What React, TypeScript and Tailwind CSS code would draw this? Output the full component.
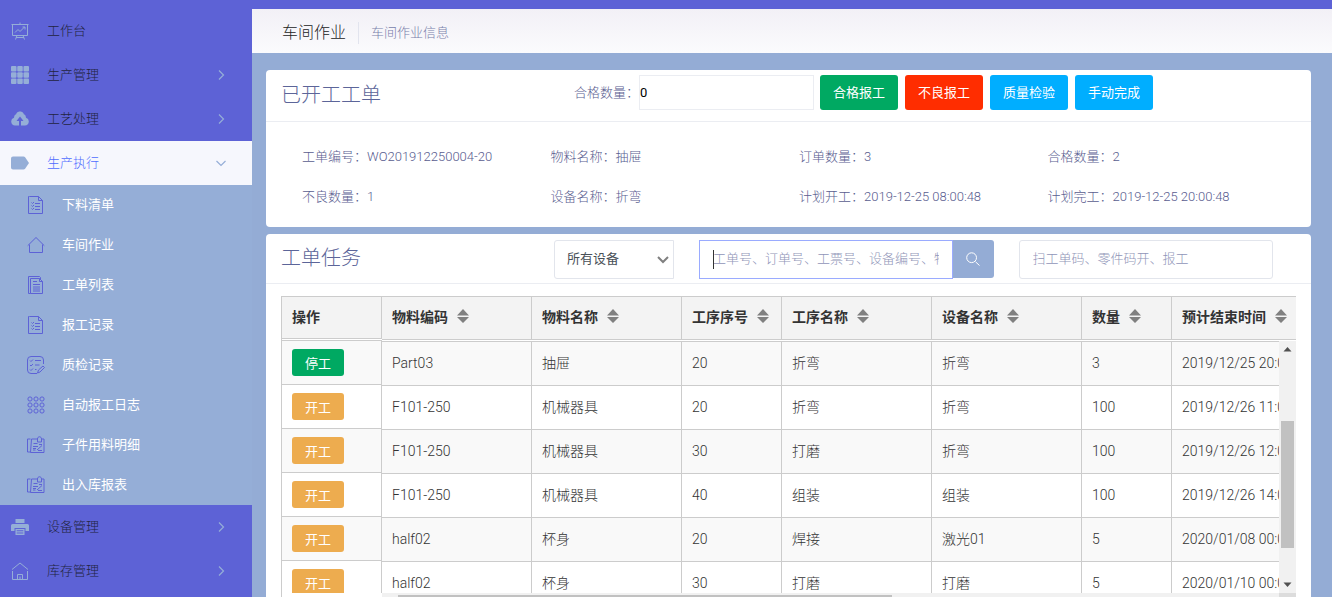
import { useState } from "react"
import type { ReactNode } from "react"
import { clsx } from "clsx"

const line = { fill: "none", stroke: "currentColor", strokeWidth: 1 }

const icons: Record<string, ReactNode> = {
  board: (
    <g {...line}>
      <path d="M.5 2.5h17M1.5 2.5v11h15v-11M9 .5v2M6 13.5l-1.5 4M12 13.5l1.5 4M5 15.5h8" />
      <path d="M4 10.5l3-3 2 2 4.500-4.500M11.500 5h2.500v2.500" />
    </g>
  ),
  grid: (
    <g fill="currentColor">
      {[0, 6.25, 12.5].map((y) =>
        [0, 6.25, 12.5].map((x) => <rect key={`${x}-${y}`} x={x} y={y} width="5.5" height="5.500" rx="1" />)
      )}
    </g>
  ),
  cloud: (
    <path
      fill="currentColor"
      fillRule="evenodd"
      d="M4 15.500a4 4 0 0 1-1-7.800C3.200 5 4.500 4.500 5 4.500 6 1.500 8 1.500 9 1.500s3 0 4 3c.5 0 1.800.5 2 3.200a4 4 0 0 1-1 7.800h-4V11h2.500L9 6.500 5.500 11H8v4.500z"
    />
  ),
  tag: <path fill="currentColor" d="M2 2.500h10.500a2 2 0 0 1 1.600.8L18 9l-3.900 5.700a2 2 0 0 1-1.600.8H2a2 2 0 0 1-2-2v-9a2 2 0 0 1 2-2z" />,
  printer: (
    <g fill="currentColor">
      <path d="M4.500 1h9v4h-9z" />
      <path d="M1.500 6h15A1.500 1.500 0 0 1 18 7.500V13h-3.500v-3h-11v3H0V7.500A1.500 1.500 0 0 1 1.500 6z" />
      <path d="M4.500 11h9v6h-9zm1.200 1.200v1h6.600v-1zm0 2.200v1h6.600v-1z" fillRule="evenodd" />
    </g>
  ),
  house: (
    <g {...line}>
      <path d="M1 7.500L9 1l8 6.500M1.500 9v8.500h15V9M6.500 17.500v-5h5v5M9 14.500v3" />
    </g>
  ),
  doc: (
    <g {...line}>
      <path d="M2.500.5h9l4 4v13h-14V.5zM11.500.5v4h4" />
      <path d="M4.500 6.500l1 1 1.500-1.500M8 7.500h5M4.500 9.500l1 1 1.500-1.500M8 10.500h5M4.500 12.500l1 1 1.500-1.500M8 13.500h5" />
    </g>
  ),
  home: (
    <g {...line}>
      <path d="M.7 9.700L9 1.500l8.300 8.200M2.500 8.500v8h13v-8" />
    </g>
  ),
  docs: (
    <g {...line}>
      <path d="M3.500 17.500h12v-12l-3-3h-9zM3.500 17.500h-2V.5h11l1 1v2M12.500 2.500v3h3" />
      <path d="M6 5.500h4M6 8.500h7M6 11h7M6 13h7M6 15h7" />
    </g>
  ),
  check: (
    <g {...line}>
      <path d="M10 17.500H4a3.500 3.500 0 0 1-3.500-3.500V4A3.500 3.500 0 0 1 4 .5h9A3.500 3.500 0 0 1 16.500 4v4" />
      <path d="M3 4.500l1 1 2-2M8 4.500h6M3 9l1 1 2-2M8 9h4.500M3 13.500l1 1 2-2M8 13.500h1.500" />
      <path d="M10.500 17l1-3 4.500-4 1.500 1.500-4.500 4.500z" />
    </g>
  ),
  dots: (
    <g {...line}>
      {[3, 9, 15].map((y) => [3, 9, 15].map((x) => <circle key={`${x}-${y}`} cx={x} cy={y} r="2.100" />))}
    </g>
  ),
  report: (
    <g {...line}>
      <path d="M3.500 3H.5v13h3M4.500 3l-1 13.500h13.500V3h-2M4.500 3h6.500M10.500 3c0-3 4-3 4 0v3h-4z" />
      <path d="M6.500 7.500h4M12 8.500h3M6 10.500h5M6 12.500h3M6 14h2.500M10 14l5-4.500M11 14.500h4" />
    </g>
  ),
}

function Icon({ name, className }: { name: string; className?: string }) {
  return (
    <svg viewBox="0 0 18 18" className={clsx("size-[18px] shrink-0", className)} aria-hidden="true">
      {icons[name]}
    </svg>
  )
}

function Chevron({ down }: { down?: boolean }) {
  return (
    <svg viewBox="0 0 10 10" className="size-[10px] text-[#95aed7]" aria-hidden="true">
      <path d={down ? "M.5 3l4.500 4.500L9.500 3" : "M3 .5L7.500 5 3 9.500"} fill="none" stroke="currentColor" strokeWidth="1.200" />
    </svg>
  )
}

const menuTop = [
  { icon: "board", label: "工作台", arrow: false },
  { icon: "grid", label: "生产管理", arrow: true },
  { icon: "cloud", label: "工艺处理", arrow: true },
]

const submenu = [
  { icon: "doc", label: "下料清单" },
  { icon: "home", label: "车间作业" },
  { icon: "docs", label: "工单列表" },
  { icon: "doc", label: "报工记录" },
  { icon: "check", label: "质检记录" },
  { icon: "dots", label: "自动报工日志" },
  { icon: "report", label: "子件用料明细" },
  { icon: "report", label: "出入库报表" },
]

const menuBottom = [
  { icon: "printer", label: "设备管理", arrow: true },
  { icon: "house", label: "库存管理", arrow: true },
]

const info = [
  ["工单编号", "WO201912250004-20"],
  ["物料名称", "抽屉"],
  ["订单数量", "3"],
  ["合格数量", "2"],
  ["不良数量", "1"],
  ["设备名称", "折弯"],
  ["计划开工", "2019-12-25 08:00:48"],
  ["计划完工", "2019-12-25 20:00:48"],
]

const columns = ["物料编码", "物料名称", "工序序号", "工序名称", "设备名称", "数量", "预计结束时间"]

const rows = [
  { running: true, cells: ["Part03", "抽屉", "20", "折弯", "折弯", "3", "2019/12/25 20:00"] },
  { running: false, cells: ["F101-250", "机械器具", "20", "折弯", "折弯", "100", "2019/12/26 11:00"] },
  { running: false, cells: ["F101-250", "机械器具", "30", "打磨", "折弯", "100", "2019/12/26 12:00"] },
  { running: false, cells: ["F101-250", "机械器具", "40", "组装", "组装", "100", "2019/12/26 14:00"] },
  { running: false, cells: ["half02", "杯身", "20", "焊接", "激光01", "5", "2020/01/08 00:00"] },
  { running: false, cells: ["half02", "杯身", "30", "打磨", "打磨", "5", "2020/01/10 00:00"] },
]

type MenuEntry = { icon: string; label: string; arrow: boolean }

function MenuItem({ item, active }: { item: MenuEntry; active?: boolean }) {
  return (
    <a
      href="#"
      className={clsx(
        "flex h-11 shrink-0 items-center pl-[11px] pr-[26px]",
        active ? "bg-[#f6f7fd] text-[#4f6cff]" : "text-[#22243f]"
      )}
    >
      <Icon name={item.icon} className="text-[#95aed7]" />
      <span className="ml-[18px] flex-1">{item.label}</span>
      {item.arrow && <Chevron down={active} />}
    </a>
  )
}

function Sidebar() {
  return (
    <nav className="flex w-[252px] shrink-0 flex-col overflow-hidden bg-[#5d62d6] pt-[9px]">
      {menuTop.map((item) => (
        <MenuItem key={item.label} item={item} />
      ))}
      <MenuItem item={{ icon: "tag", label: "生产执行", arrow: true }} active />
      <div className="shrink-0 bg-[#95aed7]">
        {submenu.map((item) => (
          <a key={item.label} href="#" className="flex h-10 items-center pl-[27px] font-normal text-white">
            <Icon name={item.icon} className="text-[#5d62d6]" />
            <span className="ml-[17px]">{item.label}</span>
          </a>
        ))}
      </div>
      {menuBottom.map((item) => (
        <MenuItem key={item.label} item={item} />
      ))}
    </nav>
  )
}

function OrderCard() {
  const [qty, setQty] = useState("0")
  const btn = "h-[35px] w-[78px] rounded-[3px] font-normal text-white"

  return (
    <section className="shrink-0 rounded bg-white">
      <div className="flex h-[52px] items-center border-b border-[#ebedf2] px-[15px] pb-[6px]">
        <h2 className="w-[293px] pt-1 text-[20px] text-[#5c6599]">已开工工单</h2>
        <label htmlFor="qty">合格数量：</label>
        <input
          id="qty"
          value={qty}
          onChange={(e) => setQty(e.target.value)}
          className="h-[35px] w-[175px] border border-[#ebedf2] font-normal text-black outline-none"
        />
        <div className="ml-[6px] flex gap-[7px]">
          <button className={clsx(btn, "bg-[#00a962]")}>合格报工</button>
          <button className={clsx(btn, "bg-[#ff2d00]")}>不良报工</button>
          <button className={clsx(btn, "bg-[#00aeff]")}>质量检验</button>
          <button className={clsx(btn, "bg-[#00aeff]")}>手动完成</button>
        </div>
      </div>
      <dl className="grid grid-cols-4 pt-[15px] pr-[15px] pb-[10px] pl-[36px] leading-10">
        {info.map(([label, value]) => (
          <div key={label} className="flex whitespace-nowrap">
            <dt>{label}：</dt>
            <dd>{value}</dd>
          </div>
        ))}
      </dl>
    </section>
  )
}

function SortIcon() {
  return (
    <svg viewBox="0 0 12 14" className="mb-[6px] ml-[9px] inline-block h-[14px] w-3 text-[#808080]" aria-hidden="true">
      <path d="M6 0l6 6.500H0zM0 8h12l-6 6z" fill="currentColor" />
    </svg>
  )
}

function ColGroup() {
  return (
    <colgroup>
      <col className="w-[150px]" />
      <col className="w-[150px]" />
      <col className="w-[100px]" />
      <col className="w-[150px]" />
      <col className="w-[150px]" />
      <col className="w-[90px]" />
      <col className="w-[150px]" />
    </colgroup>
  )
}

const tableClass = "table-fixed border-separate border-spacing-0 text-[14px]"
const cellClass = "border-r border-b border-[#ccc] px-[10px] whitespace-nowrap"

function TaskTable() {
  return (
    <div className="mx-[15px] mt-3 flex min-h-0 flex-1">
      {/* frozen action column */}
      <div className="flex w-[101px] shrink-0 flex-col overflow-hidden border-l border-[#ccc] pb-1">
        <table className={clsx(tableClass, "w-full shrink-0")}>
          <thead>
            <tr className="h-[43px] bg-[#f3f3f3] text-left text-[#333]">
              <th className={clsx(cellClass, "border-t font-bold")}>操作</th>
            </tr>
          </thead>
        </table>
        <div className="mt-px min-h-0 flex-1 overflow-hidden border-t border-[#ccc]">
          <table className={clsx(tableClass, "w-full")}>
            <tbody>
              {rows.map((row, i) => (
                <tr key={i} className="h-11 odd:bg-[#f9f9f9]">
                  <td className={cellClass}>
                    <button
                      className={clsx(
                        "block h-[27px] w-[52px] rounded-[3px] pt-[2px] text-[13px] font-normal text-white",
                        row.running ? "bg-[#00a962]" : "bg-[#edac4f]"
                      )}
                    >
                      {row.running ? "停工" : "开工"}
                    </button>
                  </td>
                </tr>
              ))}
            </tbody>
          </table>
        </div>
      </div>

      <div className="flex min-w-0 flex-1 flex-col">
        <div className="shrink-0 overflow-hidden bg-[#f3f3f3]">
          <table className={clsx(tableClass, "w-[940px]")}>
            <ColGroup />
            <thead>
              <tr className="h-11 text-left text-[#333]">
                {columns.map((name) => (
                  <th key={name} className={clsx(cellClass, "border-t font-bold")}>
                    {name}
                    <SortIcon />
                  </th>
                ))}
              </tr>
            </thead>
          </table>
        </div>
        <div className="mt-px flex min-h-0 flex-1">
          <div className="min-w-0 flex-1 overflow-hidden border-t border-[#ccc]">
            <table className={clsx(tableClass, "w-[940px] text-[#333]")}>
              <ColGroup />
              <tbody>
                {rows.map((row, i) => (
                  <tr key={i} className="h-11 odd:bg-[#f9f9f9]">
                    {row.cells.map((cell, j) => (
                      <td key={j} className={cellClass}>
                        {cell}
                      </td>
                    ))}
                  </tr>
                ))}
              </tbody>
            </table>
          </div>
          <div className="flex w-[17px] shrink-0 flex-col items-center bg-[#f1f1f1]">
            <svg viewBox="0 0 17 17" className="size-[17px] shrink-0 text-[#505050]" aria-hidden="true">
              <path d="M4.500 10.500L8.500 6l4 4.500z" fill="currentColor" />
            </svg>
            <div className="grow-[62]" />
            <div className="w-[13px] grow-[126] bg-[#c1c1c1]" />
            <div className="grow-[28]" />
            <svg viewBox="0 0 17 17" className="size-[17px] shrink-0 text-[#505050]" aria-hidden="true">
              <path d="M4.500 6.500L8.500 11l4-4.500z" fill="currentColor" />
            </svg>
          </div>
        </div>
        <div className="flex h-1 shrink-0 bg-[#f1f1f1]">
          <div className="w-4" />
          <div className="mt-[2px] w-[54%] bg-[#c1c1c1]" />
          <div className="ml-auto w-[17px] bg-[#dcdcdc]" />
        </div>
      </div>
    </div>
  )
}

function TaskCard() {
  return (
    <section className="mt-[7px] flex min-h-0 flex-1 flex-col rounded-t bg-white">
      <div className="grid h-[50px] shrink-0 grid-cols-[248px_120px_294fr_254fr] items-center gap-x-[25px] border-b border-[#ebedf2] pt-px pr-[38px] pl-[15px]">
        <h2 className="pb-[2px] text-[20px] text-[#5c6599]">工单任务</h2>
        <div className="relative">
          <select
            aria-label="设备"
            className="h-[39px] w-full appearance-none rounded-l-[3px] border border-[#e2e5ec] bg-white px-3 font-normal text-[#495057] outline-none"
          >
            <option>所有设备</option>
          </select>
          <svg viewBox="0 0 12 8" className="pointer-events-none absolute top-4 right-[5px] h-2 w-3 text-[#808080]" aria-hidden="true">
            <path d="M1 1l5 5 5-5" fill="none" stroke="currentColor" strokeWidth="2" />
          </svg>
        </div>
        <div className="relative flex">
          <input
            aria-label="搜索工单"
            placeholder="工单号、订单号、工票号、设备编号、物料编码"
            className="h-[39px] min-w-0 flex-1 border border-[#9aabff] px-[13px] pb-[2px] outline-none placeholder:text-[#9095b8]"
          />
          <span className="absolute top-[10px] left-[14px] h-[19px] w-px bg-[#333]" />
          <button aria-label="搜索" className="flex h-[38px] w-[41px] items-center justify-center rounded-r-[3px] bg-[#94acd5] text-white">
            <svg viewBox="0 0 14 14" className="size-[14px]" aria-hidden="true">
              <path d="M9.500 9.800L13.500 13.500M10.500 5.700a4.900 4.900 0 1 1-9.800 0 4.900 4.900 0 0 1 9.800 0z" fill="none" stroke="currentColor" />
            </svg>
          </button>
        </div>
        <input
          aria-label="扫码报工"
          placeholder="扫工单码、零件码开、报工"
          className="h-[39px] w-full rounded-[3px] border border-[#e2e5ec] px-[13px] pb-[2px] outline-none placeholder:text-[#9095b8]"
        />
      </div>
      <TaskTable />
    </section>
  )
}

export default function App() {
  return (
    <div className="flex h-screen overflow-hidden bg-[#94acd5] font-['Roboto','Noto_Sans_CJK_SC',sans-serif] text-[13px] font-light text-[#595d8f]">
      <Sidebar />
      <div className="flex min-w-0 flex-1 flex-col">
        <div className="h-[9px] shrink-0 bg-[#5d62d6]" />
        <header className="flex h-11 shrink-0 items-center bg-linear-to-b from-[#f2f0f6] to-[#fbfbfd] pt-1 pl-[30px]">
          <h1 className="text-[16px] text-[#222]">车间作业</h1>
          <span className="mx-3 h-[22px] w-px bg-[#e2e4ee]" />
          <span className="text-[#787eaa]">车间作业信息</span>
        </header>
        <main className="flex min-h-0 flex-1 flex-col pt-[17px] pr-[21px] pl-[14px]">
          <OrderCard />
          <TaskCard />
        </main>
      </div>
    </div>
  )
}
